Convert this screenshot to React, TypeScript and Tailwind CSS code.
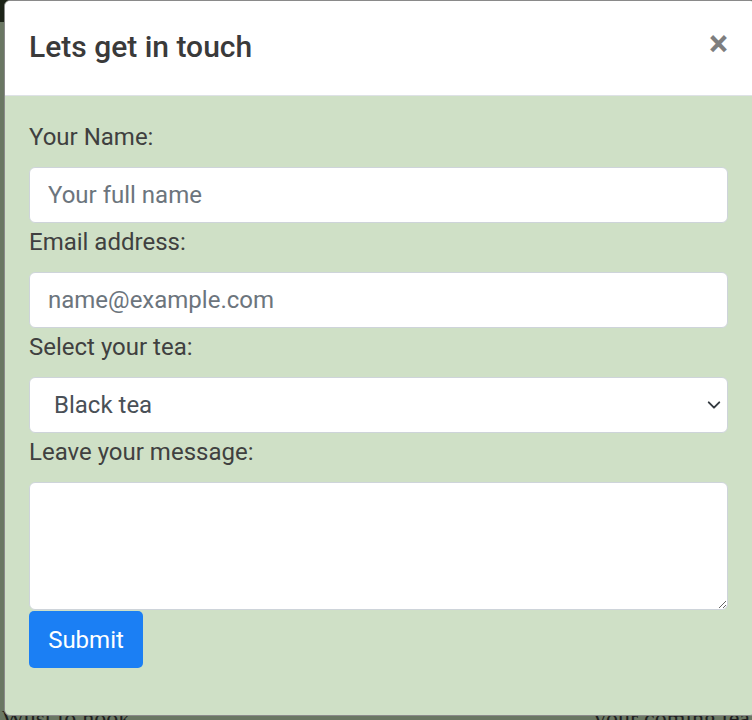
import { useState } from 'react'

const teas = ['Black tea', 'Green tea', 'White tea', 'Oolong tea', 'Herbal tea']

export default function App() {
  const [tea, setTea] = useState(teas[0])

  return (
    <div className="relative h-[720px] w-[752px] overflow-hidden bg-[#6a7763] font-['Roboto',sans-serif]">
      {/* page behind the modal */}
      <div className="absolute left-0 top-0 h-[22px] w-full bg-[#1d2418]" />
      <div className="absolute left-0 top-[706px] flex w-full justify-between px-[2px] font-['Liberation_Serif',serif] text-[24px] leading-none text-[#1e1e1e]">
        <span>Wust   to hook</span>
        <span>your coming tea</span>
      </div>

      <div className="absolute left-[4px] top-0 w-[752px] overflow-hidden rounded-[6px] border border-[#8a8a8a] bg-[#cfe0c6]">
        <div className="flex h-[95px] items-center justify-between border-b border-[#dee2e6] bg-white pl-[24px] pr-[27px]">
          <h4 className="pb-[2px] text-[30px] font-medium leading-[1.2] text-[#3a3a3a]">Lets get in touch</h4>
          <button className="pb-[8px] text-[36px] font-bold leading-none text-black opacity-50">×</button>
        </div>

        <form className="px-[24px] pb-[47px] pt-[22px] text-[24px] leading-[36px] text-[#404040]">
          <label className="mb-[12px] mt-[1px] block">Your Name:</label>
          <input
            type="text"
            placeholder="Your full name"
            className="block h-[56px] w-[699px] rounded-[6px] border border-[#ced4da] bg-white px-[18px] text-[24px] text-[#495057] placeholder:text-[#6c757d] focus:outline-none"
          />

          <label className="mb-[12px] mt-[1px] block">Email address:</label>
          <input
            type="email"
            placeholder="name@example.com"
            className="block h-[56px] w-[699px] rounded-[6px] border border-[#ced4da] bg-white px-[18px] text-[24px] text-[#495057] placeholder:text-[#6c757d] focus:outline-none"
          />

          <label className="mb-[12px] mt-[1px] block">Select your tea:</label>
          <div className="relative w-[699px]">
            <select
              value={tea}
              onChange={(e) => setTea(e.target.value)}
              className="block h-[56px] w-full appearance-none rounded-[6px] border border-[#ced4da] bg-white pl-[24px] pr-[40px] text-[24px] text-[#495057] focus:outline-none"
            >
              {teas.map((t) => (
                <option key={t}>{t}</option>
              ))}
            </select>
            <svg className="pointer-events-none absolute right-[7px] top-[21px] h-[14px] w-[14px]" viewBox="0 0 16 16" fill="none">
              <path d="M2 5l6 6 6-6" stroke="#343a40" strokeWidth="2.2" strokeLinecap="round" strokeLinejoin="round" />
            </svg>
          </div>

          <label className="mb-[12px] mt-[1px] block">Leave your message:</label>
          <textarea className="block h-[128px] w-[699px] rounded-[6px] border border-[#ced4da] bg-white px-[18px] py-[8px] text-[24px] focus:outline-none" />

          <button
            type="button"
            className="mt-[1px] block h-[57px] w-[114px] rounded-[5px] bg-[#1b7ff4] text-[24px] text-white"
          >
            Submit
          </button>
        </form>
      </div>
    </div>
  )
}
